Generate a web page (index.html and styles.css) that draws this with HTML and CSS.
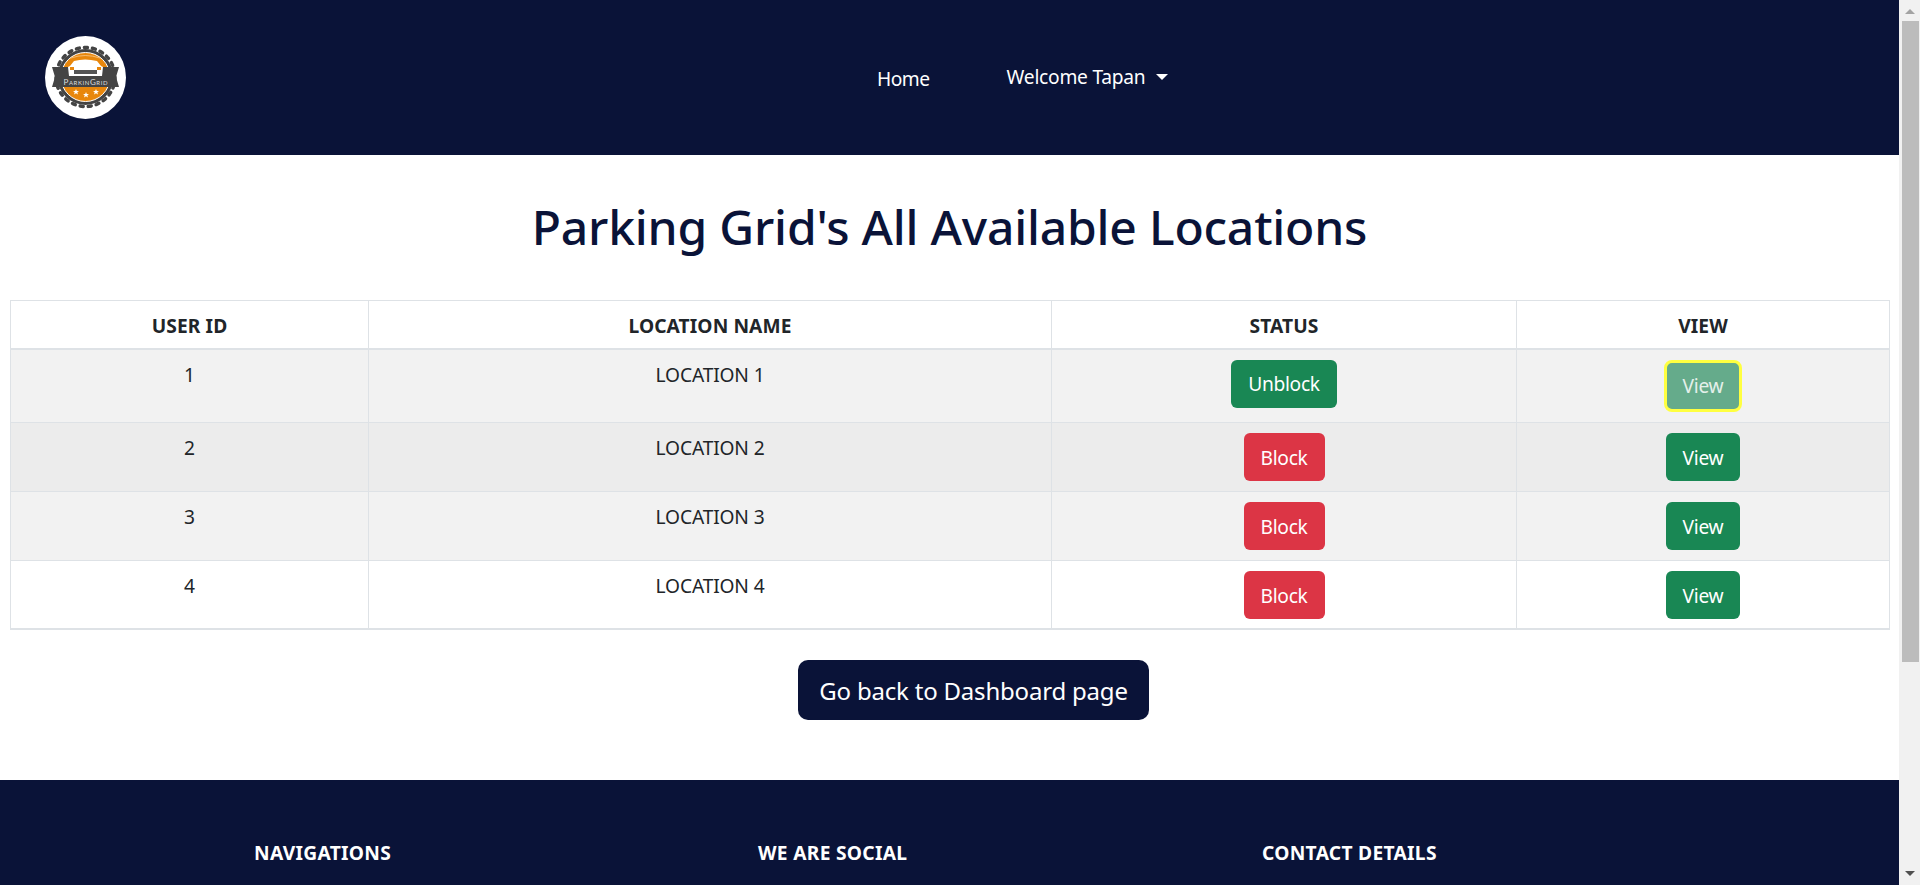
FILE: index.html
```html
<!DOCTYPE html>
<html lang="en">
<head>
    <meta charset="UTF-8">
    <meta name="viewport" content="width=device-width, initial-scale=1.0">
    <title>Parking Grid - Locations</title>
    <link rel="stylesheet" href="styles.css">
</head>
<body>
    <div class="app">
        <div class="page">
            <header class="topbar">
                <a class="logo" href="#">
                    <svg viewBox="0 0 81 83" width="81" height="83">
                        <ellipse cx="40.5" cy="41.5" rx="40.5" ry="41.5" fill="#fff"/>
                        <circle cx="40.5" cy="41" r="28" fill="#444"/>
                        <circle cx="40.5" cy="41" r="29.500" fill="none" stroke="#444" stroke-width="3.500" stroke-linecap="round" stroke-dasharray="3 5.100"/>
                        <circle cx="40.5" cy="41" r="24.5" fill="#e8870c" stroke="#fff" stroke-width="1"/>
                        <path d="M26 22 Q40 17 55 22" fill="none" stroke="#f7c98a" stroke-width="0.800"/>
                        <polygon points="7,31 74,31 71,41 74,51 7,51 10,41" fill="#444"/>
                        <path d="M29 25 Q40 22 52 25 L56 30 L58 31 L57 40 L24 40 L23 31 L25 30 Z" fill="#fff"/>
                        <rect x="29" y="34" width="23" height="4" fill="#555"/>
                        <rect x="25" y="31" width="4" height="3" fill="#e8870c"/>
                        <rect x="52" y="31" width="4" height="3" fill="#e8870c"/>
                        <text x="40.500" y="48.500" class="logo-text" text-anchor="middle" textLength="44">ParkinGrid</text>
                        <polygon points="31,53 31.800,55 34,55 32.300,56.300 33,58.500 31,57.300 29,58.500 29.700,56.300 28,55 30.200,55" fill="#fff"/>
                        <polygon points="41,56 41.800,58 44,58 42.300,59.300 43,61.500 41,60.300 39,61.500 39.700,59.300 38,58 40.200,58" fill="#fff"/>
                        <polygon points="51,53 51.800,55 54,55 52.300,56.300 53,58.500 51,57.300 49,58.500 49.700,56.300 48,55 50.200,55" fill="#fff"/>
                    </svg>
                </a>
                <nav class="nav">
                    <a class="nav-link nav-home" href="#">Home</a>
                    <a class="nav-link nav-user" href="#">Welcome Tapan<span class="caret"></span></a>
                </nav>
            </header>

            <main class="content">
                <h1 class="title">Parking Grid's All Available Locations</h1>
                <table class="grid">
                    <colgroup>
                        <col class="col-id">
                        <col class="col-name">
                        <col class="col-status">
                        <col class="col-view">
                    </colgroup>
                    <thead>
                        <tr>
                            <th>USER ID</th>
                            <th>LOCATION NAME</th>
                            <th>STATUS</th>
                            <th>VIEW</th>
                        </tr>
                    </thead>
                    <tbody>
                        <tr class="row-first">
                            <td>1</td>
                            <td>LOCATION 1</td>
                            <td><button class="btn btn-green">Unblock</button></td>
                            <td><button class="btn btn-focus">View</button></td>
                        </tr>
                        <tr class="row-dark">
                            <td>2</td>
                            <td>LOCATION 2</td>
                            <td><button class="btn btn-red">Block</button></td>
                            <td><button class="btn btn-green">View</button></td>
                        </tr>
                        <tr class="row-light">
                            <td>3</td>
                            <td>LOCATION 3</td>
                            <td><button class="btn btn-red">Block</button></td>
                            <td><button class="btn btn-green">View</button></td>
                        </tr>
                        <tr class="row-last">
                            <td>4</td>
                            <td>LOCATION 4</td>
                            <td><button class="btn btn-red">Block</button></td>
                            <td><button class="btn btn-green">View</button></td>
                        </tr>
                    </tbody>
                </table>
                <div class="back-wrap">
                    <a class="back-btn" href="#">Go back to Dashboard page</a>
                </div>
            </main>

            <footer class="footer">
                <h5>NAVIGATIONS</h5>
                <h5>WE ARE SOCIAL</h5>
                <h5>CONTACT DETAILS</h5>
            </footer>
        </div>
        <div class="scrollbar">
            <span class="arrow-up"></span>
            <div class="thumb"></div>
            <span class="arrow-down"></span>
        </div>
    </div>
</body>
</html>
```

FILE: styles.css
```css
* {
    box-sizing: border-box;
}
body {
    margin: 0;
    font-family: "Noto Sans", "Open Sans", sans-serif;
    color: #212529;
    background: #fff;
}
.app {
    display: flex;
    height: 885px;
    overflow: hidden;
}
.page {
    flex: 1;
    min-width: 0;
}
.scrollbar {
    display: flex;
    flex-direction: column;
    align-items: center;
    width: 21px;
    padding: 9px 0 9px 1px;
    background: #f1f1f1;
}
.arrow-up {
    border-bottom: 5px solid #a3a3a3;
    border-left: 5px solid transparent;
    border-right: 5px solid transparent;
}
.thumb {
    width: 17px;
    height: 641px;
    margin-top: 7px;
    background: #bcbcbc;
}
.arrow-down {
    margin-top: auto;
    border-top: 5px solid #505050;
    border-left: 5px solid transparent;
    border-right: 5px solid transparent;
}

.topbar {
    display: flex;
    align-items: center;
    height: 155px;
    padding-left: 45px;
    background: #0a1338;
}
.logo {
    display: block;
    height: 83px;
    margin-top: -1px;
}
.logo-text {
    font-family: "Lato", sans-serif;
    font-size: 8px;
    font-variant: small-caps;
    fill: #ddd;
}
.nav {
    display: flex;
    align-items: center;
    gap: 77px;
    margin-left: 751px;
}
.nav-link {
    color: #fff;
    text-decoration: none;
    font-size: 19.2px;
}
.nav-home {
    margin-top: 1px;
    letter-spacing: -0.5px;
}
.nav-user {
    display: flex;
    align-items: center;
    margin-top: -2px;
    letter-spacing: -0.25px;
}
.caret {
    width: 0;
    height: 0;
    margin-left: 11px;
    border-top: 6px solid #fff;
    border-left: 6px solid transparent;
    border-right: 6px solid transparent;
}

.content {
    height: 625px;
    padding: 0 10px;
}
.title {
    margin: 0;
    padding-top: 43px;
    height: 145px;
    text-align: center;
    font-size: 48px;
    font-weight: 500;
    line-height: 58px;
    letter-spacing: -0.2px;
    color: #0a1338;
}
.grid {
    width: 1879px;
    table-layout: fixed;
    border-collapse: collapse;
    border: 1px solid #dee2e6;
    border-bottom-width: 2px;
    font-size: 19.2px;
}
.col-id { width: 358px; }
.col-name { width: 683px; }
.col-status { width: 465px; }
.col-view { width: 373px; }

.grid th {
    height: 48px;
    padding: 2px 8px 0;
    text-align: center;
    font-size: 19.2px;
    font-weight: 700;
    letter-spacing: 0.1px;
    border: 1px solid #dee2e6;
    border-bottom-width: 2px;
}
.grid td {
    height: 69px;
    padding: 11px 8px 9px;
    text-align: center;
    vertical-align: top;
    letter-spacing: -0.15px;
    border: 1px solid #dee2e6;
}
.row-first td {
    height: 74px;
    background: #f2f2f2;
}
.row-dark td {
    background: #ececec;
}
.row-light td {
    background: #f2f2f2;
}
.row-last td {
    height: 68px;
}

.btn {
    display: inline-block;
    height: 48px;
    margin-top: -1px;
    padding: 0 17px;
    border: 0;
    border-radius: 6px;
    color: #fff;
    font-family: inherit;
    font-size: 19.2px;
    letter-spacing: -0.3px;
    vertical-align: top;
}
.btn-green {
    background: #198754;
}
.btn-red {
    background: #dc3545;
}
.btn-focus {
    margin-top: 1px;
    background: #65ab8b;
    color: #e4f0ea;
    outline: 3px solid #ffff40;
    outline-offset: -1px;
}

.back-wrap {
    display: flex;
    justify-content: center;
    padding: 30px 0 0 48px;
}
.back-btn {
    padding: 15px 21px 13px;
    height: 60px;
    border-radius: 10px;
    background: #0a1338;
    color: #fff;
    text-decoration: none;
    font-size: 24px;
    line-height: 32px;
    letter-spacing: -0.2px;
}

.footer {
    display: grid;
    grid-template-columns: 504px 504px 1fr;
    height: 105px;
    padding: 61px 0 0 254px;
    background: #0a1338;
}
.footer h5 {
    margin: 0;
    color: #fff;
    font-size: 19.2px;
    font-weight: 700;
    line-height: 24px;
    letter-spacing: 0.3px;
}
```
